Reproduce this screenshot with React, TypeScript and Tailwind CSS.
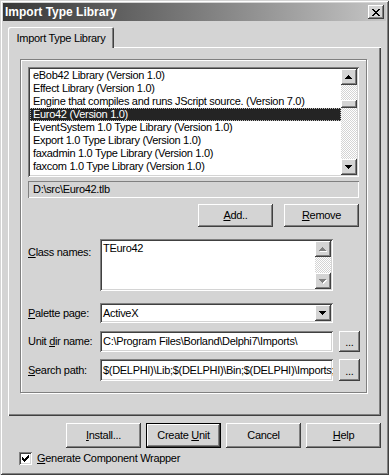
import React from "react";

const RAISED =
  "shadow-[inset_-1px_-1px_#404040,inset_1px_1px_#ffffff,inset_-2px_-2px_#808080,inset_2px_2px_#d4d4d4]";
const SUNKEN =
  "shadow-[inset_1px_1px_#808080,inset_-1px_-1px_#ffffff,inset_2px_2px_#404040,inset_-2px_-2px_#d4d4d4]";
const DITHER =
  "[background-image:repeating-conic-gradient(#ffffff_0_25%,#d4d4d4_0_50%)] [background-size:2px_2px]";

const libs = [
  "eBob42 Library (Version 1.0)",
  "Effect Library (Version 1.0)",
  "Engine that compiles and runs JScript source. (Version 7.0)",
  "Euro42 (Version 1.0)",
  "EventSystem 1.0 Type Library (Version 1.0)",
  "Export 1.0 Type Library (Version 1.0)",
  "faxadmin 1.0 Type Library (Version 1.0)",
  "faxcom 1.0 Type Library (Version 1.0)",
  "FIRLICIIF 1.0 Type Library (Version 1.0)",
];

const Arrow: React.FC<{ down?: boolean; disabled?: boolean }> = ({ down, disabled }) => {
  const d = down
    ? "M0 0h7v1h-1v1h-1v1h-1v1h-1v-1h-1v-1h-1v-1h-1z"
    : "M3 0h1v1h1v1h1v1h1v1H0V3h1V2h1V1h1z";
  return (
    <svg width="8" height="5" viewBox="0 0 8 5" shapeRendering="crispEdges">
      {disabled && <path d={d} fill="#ffffff" transform="translate(1 1)" />}
      <path d={d} fill={disabled ? "#808080" : "#000000"} />
    </svg>
  );
};

const ScrollBtn: React.FC<{ down?: boolean; disabled?: boolean }> = ({ down, disabled }) => (
  <div className={`w-[16px] h-[16px] bg-[#d4d4d4] flex items-center justify-center ${RAISED}`}>
    <Arrow down={down} disabled={disabled} />
  </div>
);

const Button: React.FC<{ w?: string; h?: string; def?: boolean; children: React.ReactNode }> = ({
  w = "w-[75px]",
  h = "h-[23px]",
  def,
  children,
}) => (
  <div className={`${w} ${h} ${def ? "border border-black" : ""} bg-[#d4d4d4]`}>
    <div className={`w-full h-full flex items-center justify-center ${RAISED}`}>{children}</div>
  </div>
);

const Edit: React.FC<{ text: string }> = ({ text }) => (
  <div className={`w-[233px] h-full bg-white ${SUNKEN} px-[3px] flex items-center overflow-hidden whitespace-nowrap`}>
    {text}
  </div>
);

const Dots: React.FC = () => (
  <div className={`w-[21px] h-full bg-[#d4d4d4] ${RAISED} flex items-end justify-center pb-[4px] leading-none`}>
    ...
  </div>
);

export default function App() {
  return (
    <div className="w-[389px] h-[475px] bg-[#d4d4d4] p-[3px] flex flex-col font-['Liberation_Sans',Arial,sans-serif] text-[11px] tracking-[-0.3px] text-black shadow-[inset_1px_1px_#d4d4d4,inset_-1px_-1px_#404040,inset_2px_2px_#ffffff,inset_-2px_-2px_#808080]">
      {/* title bar */}
      <div className="h-[18px] flex items-center justify-between pl-[2px] pr-[2px] bg-gradient-to-r from-[#383838] to-[#c6c6c6]">
        <span className="text-white font-bold text-[12px] tracking-[0px]">Import Type Library</span>
        <div className={`w-[16px] h-[14px] bg-[#d4d4d4] flex items-center justify-center ${RAISED}`}>
          <svg width="8" height="7" viewBox="0 0 8 7" shapeRendering="crispEdges">
            <path d="M0 0h2v1h1v1h2V1h1V0h2v1H7v1H6v1H5v1h1v1h1v1h1v1H6V6H5V5H3v1H2v1H0V6h1V5h1V4h1V3H2V2H1V1H0z" fill="#000" />
          </svg>
        </div>
      </div>

      {/* tab */}
      <div className="mt-[6px] ml-[5px] relative z-10 -mb-[1px] w-[106px] h-[21px] bg-[#d4d4d4] rounded-t-[2px] shadow-[inset_1px_1px_#ffffff,inset_-1px_0_#404040,inset_-2px_0_#808080] flex items-start pt-[3px] justify-center">
        Import Type Library
      </div>

      {/* tab panel */}
      <div className="ml-[5px] w-[373px] h-[369px] pl-[12px] pt-[12px] shadow-[inset_1px_1px_#ffffff,inset_-1px_-1px_#404040,inset_-2px_-2px_#808080]">
        <div className="w-[347px] h-[334px] border border-[#808080] shadow-[inset_1px_1px_#ffffff,1px_1px_#ffffff] pl-[7px] pt-[7px] flex flex-col">
          {/* library list */}
          <div className={`w-[331px] h-[110px] bg-white ${SUNKEN} p-[2px] flex`}>
            <div className="flex-1 overflow-hidden">
              {libs.map((l, i) => (
                <div
                  key={l}
                  className={`h-[13px] leading-[13px] pl-[3px] whitespace-nowrap ${
                    i === 3
                      ? "bg-[#242424] text-white outline-1 outline-dotted outline-[#bdbdbd] -outline-offset-1"
                      : ""
                  }`}
                >
                  {l}
                </div>
              ))}
            </div>
            <div className="w-[16px] flex flex-col">
              <ScrollBtn />
              <div className={`flex-1 ${DITHER} flex flex-col`}>
                <div className="h-[15px]" />
                <div className={`h-[8px] bg-[#d4d4d4] ${RAISED}`} />
              </div>
              <ScrollBtn down />
            </div>
          </div>

          {/* file path */}
          <div className="mt-[4px] w-[331px] h-[17px] shadow-[inset_1px_1px_#808080,inset_-1px_-1px_#ffffff] flex items-center px-[5px]">
            D:\src\Euro42.tlb
          </div>

          {/* add / remove */}
          <div className="mt-[6px] w-[331px] flex justify-end gap-[11px]">
            <Button>
              <span><u>A</u>dd..</span>
            </Button>
            <Button>
              <span><u>R</u>emove</span>
            </Button>
          </div>

          {/* class names */}
          <div className="mt-[12px] flex h-[52px]">
            <div className="w-[72px] pt-[5px]">
              <u>C</u>lass names:
            </div>
            <div className={`w-[233px] h-full bg-white ${SUNKEN} p-[2px] flex`}>
              <div className="flex-1 pl-[1px] pt-[1px] leading-[13px]">TEuro42</div>
              <div className="w-[16px] flex flex-col">
                <ScrollBtn disabled />
                <div className={`flex-1 ${DITHER}`} />
                <ScrollBtn down disabled />
              </div>
            </div>
          </div>

          {/* palette page */}
          <div className="mt-[12px] flex items-center h-[20px]">
            <div className="w-[72px]">
              <u>P</u>alette page:
            </div>
            <div className={`w-[233px] h-full bg-white ${SUNKEN} p-[2px] flex`}>
              <div className="flex-1 pl-[1px] flex items-center">ActiveX</div>
              <div className={`w-[16px] h-full bg-[#d4d4d4] ${RAISED} flex items-center justify-center`}>
                <Arrow down />
              </div>
            </div>
          </div>

          {/* unit dir */}
          <div className="mt-[8px] flex items-center h-[21px]">
            <div className="w-[72px]">
              Unit <u>d</u>ir name:
            </div>
            <Edit text="C:\Program Files\Borland\Delphi7\Imports\" />
            <div className="ml-[6px] h-full">
              <Dots />
            </div>
          </div>

          {/* search path */}
          <div className="mt-[7px] flex items-center h-[22px]">
            <div className="w-[72px]">
              <u>S</u>earch path:
            </div>
            <Edit text="$(DELPHI)\Lib;$(DELPHI)\Bin;$(DELPHI)\Imports;$(DELPHI)\Projects\Bpl" />
            <div className="ml-[6px] h-full">
              <Dots />
            </div>
          </div>
        </div>
      </div>

      {/* dialog buttons */}
      <div className="mt-[7px] pr-[5px] flex justify-end gap-[5px]">
        <Button h="h-[25px]">
          <span><u>I</u>nstall...</span>
        </Button>
        <Button h="h-[25px]" def>
          <span>Create <u>U</u>nit</span>
        </Button>
        <Button h="h-[25px]">
          <span>Cancel</span>
        </Button>
        <Button h="h-[25px]">
          <span><u>H</u>elp</span>
        </Button>
      </div>

      {/* wrapper checkbox */}
      <div className="mt-[4px] pl-[16px] flex items-center gap-[5px] h-[13px]">
        <div className={`w-[13px] h-[13px] bg-white ${SUNKEN} flex items-center justify-center`}>
          <svg width="7" height="7" viewBox="0 0 7 7" shapeRendering="crispEdges">
            <path d="M6 0h1v3H6v1H5v1H4v1H3v1H2V6H1V5H0V2h1v1h1v1h1V3h1V2h1V1h1z" fill="#000" />
          </svg>
        </div>
        <span>
          <u>G</u>enerate Component Wrapper
        </span>
      </div>
    </div>
  );
}
